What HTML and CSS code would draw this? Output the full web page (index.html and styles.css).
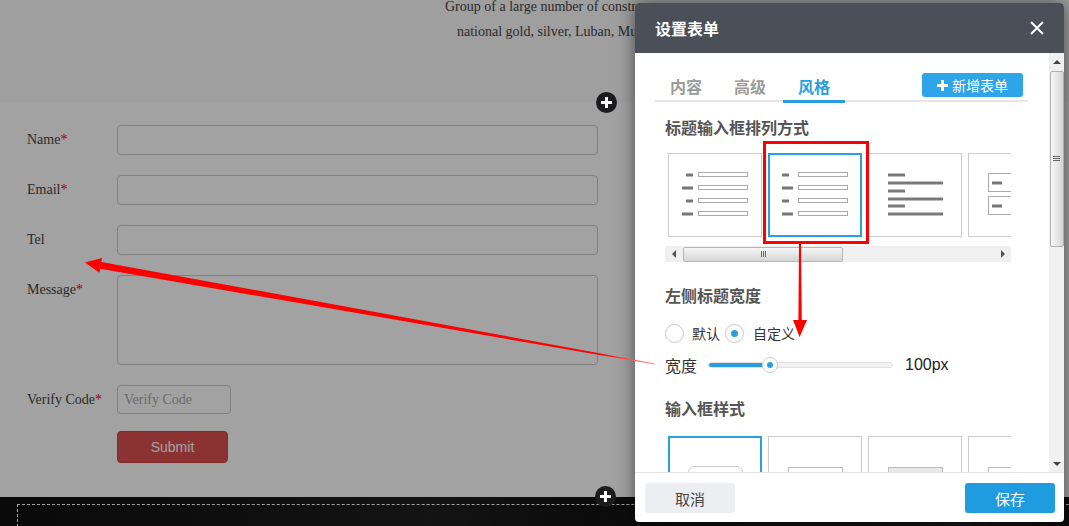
FILE: index.html
```html
<!DOCTYPE html>
<html lang="zh">
<head>
<meta charset="utf-8">
<title>设置表单</title>
<link rel="stylesheet" href="styles.css">
</head>
<body>
<div class="page">
  <section class="hero">
    <p class="intro">
      <span class="line l1">Group of a large number of constr</span>
      <span class="line l2">national gold, silver, Luban, Mu</span>
    </p>
  </section>
  <section class="form-sec">
    <form class="form">
      <div class="row"><label class="lbl">Name<em>*</em></label><input class="inp" type="text"></div>
      <div class="row"><label class="lbl">Email<em>*</em></label><input class="inp" type="text"></div>
      <div class="row"><label class="lbl">Tel</label><input class="inp" type="text"></div>
      <div class="row"><label class="lbl">Message<em>*</em></label><textarea class="inp area"></textarea></div>
      <div class="row"><label class="lbl">Verify Code<em>*</em></label><input class="inp code" type="text" placeholder="Verify Code"></div>
      <div class="row submit-row"><span></span><button type="button" class="submit">Submit</button></div>
    </form>
  </section>
  <section class="band"><div class="dash-box"></div></section>
</div>

<div class="overlay"></div>
<span class="plus p1"></span>
<span class="plus p2"></span>

<div class="modal">
  <header class="m-head">
    <h2 class="m-title">设置表单</h2>
    <svg class="close" width="14" height="14" viewBox="0 0 14 14"><path d="M1 1L13 13M13 1L1 13" stroke="#fff" stroke-width="2" fill="none"/></svg>
  </header>
  <div class="m-body">
    <div class="m-content">
      <div class="tabs">
        <span class="tab">内容</span>
        <span class="tab">高级</span>
        <span class="tab active">风格</span>
        <button type="button" class="add-btn"><svg width="11" height="11" viewBox="0 0 11 11"><rect x="4" y="0" width="3" height="11" fill="#fff"/><rect x="0" y="4" width="11" height="3" fill="#fff"/></svg>新增表单</button>
      </div>

      <h3 class="sec-title t1">标题输入框排列方式</h3>
      <div class="scroller">
        <div class="cards">
          <div class="card">
            <svg width="92" height="82" viewBox="0 0 92 82">
              <g fill="#777">
                <rect x="17" y="19.5" width="7" height="3"/>
                <rect x="13" y="32.5" width="11" height="3"/>
                <rect x="17" y="45.5" width="7" height="3"/>
                <rect x="13" y="58.5" width="11" height="3"/>
              </g>
              <g fill="none" stroke="#aaa">
                <rect x="29.5" y="18.5" width="49" height="4"/>
                <rect x="29.5" y="31.5" width="49" height="4"/>
                <rect x="29.5" y="44.5" width="49" height="4"/>
                <rect x="29.5" y="57.5" width="49" height="4"/>
              </g>
            </svg>
          </div>
          <div class="card selected">
            <svg width="92" height="82" viewBox="0 0 92 82">
              <g fill="#777">
                <rect x="13" y="19.5" width="7" height="3"/>
                <rect x="13" y="32.5" width="11" height="3"/>
                <rect x="13" y="45.5" width="7" height="3"/>
                <rect x="13" y="58.5" width="11" height="3"/>
              </g>
              <g fill="none" stroke="#aaa">
                <rect x="29.5" y="18.5" width="49" height="4"/>
                <rect x="29.5" y="31.5" width="49" height="4"/>
                <rect x="29.5" y="44.5" width="49" height="4"/>
                <rect x="29.5" y="57.5" width="49" height="4"/>
              </g>
            </svg>
          </div>
          <div class="card">
            <svg width="92" height="82" viewBox="0 0 92 82">
              <g fill="#7a7a7a">
                <rect x="19" y="19.5" width="17" height="3"/>
                <rect x="19" y="27.5" width="55" height="3"/>
                <rect x="19" y="35.5" width="17" height="3"/>
                <rect x="19" y="43.5" width="55" height="3"/>
                <rect x="19" y="50.5" width="17" height="3"/>
                <rect x="19" y="58.5" width="55" height="3"/>
              </g>
            </svg>
          </div>
          <div class="card">
            <svg width="92" height="82" viewBox="0 0 92 82">
              <g fill="none" stroke="#aaa">
                <rect x="19.5" y="19.5" width="60" height="18"/>
                <rect x="19.5" y="42.5" width="60" height="18"/>
              </g>
              <g fill="#777">
                <rect x="23" y="27.5" width="10" height="3"/>
                <rect x="23" y="50.5" width="10" height="3"/>
              </g>
            </svg>
          </div>
        </div>
        <div class="hbar">
          <span class="arr"><i class="tri-left"></i></span>
          <span class="hthumb"><i class="grip-v"></i></span>
          <span class="hspace"></span>
          <span class="arr"><i class="tri-right"></i></span>
        </div>
      </div>

      <h3 class="sec-title t2">左侧标题宽度</h3>
      <div class="radios">
        <span class="radio"></span><span class="r-label">默认</span>
        <span class="radio checked"><i></i></span><span class="r-label">自定义</span>
      </div>
      <div class="slider-row">
        <span class="s-label">宽度</span>
        <span class="track"><span class="fill"></span><span class="knob"><i></i></span></span>
        <span class="s-value">100px</span>
      </div>

      <h3 class="sec-title t3">输入框样式</h3>
      <div class="cards cards2">
        <div class="card selected"><span class="shape round"></span></div>
        <div class="card"><span class="shape square"></span></div>
        <div class="card"><span class="shape filled"></span></div>
        <div class="card"><span class="shape square"></span></div>
      </div>
    </div>
    <div class="vscroll">
      <span class="varr"><i class="tri-up"></i></span>
      <span class="vthumb"><i class="grip-h"></i></span>
      <span class="vspace"></span>
      <span class="varr"><i class="tri-down"></i></span>
    </div>
  </div>
  <footer class="m-foot">
    <button type="button" class="btn cancel">取消</button>
    <button type="button" class="btn save">保存</button>
  </footer>
</div>

<svg class="notes" width="1069" height="526" viewBox="0 0 1069 526">
  <defs>
    <linearGradient id="fade" gradientUnits="userSpaceOnUse" x1="85" y1="0" x2="656" y2="0">
      <stop offset="0" stop-color="#ff0000"/>
      <stop offset="0.9" stop-color="#ff0000"/>
      <stop offset="1" stop-color="#ff9a9a"/>
    </linearGradient>
  </defs>
  <rect x="764.5" y="142.5" width="103" height="100" fill="none" stroke="#ff0000" stroke-width="3"/>
  <polygon points="799,244 801,244 801.8,320 807,320 799.6,337 793,320 798.4,320" fill="#ff0000"/>
  <polygon points="85,262.5 102.1,257.9 101.4,261.9 655.1,363.4 654.9,364.6 100.1,268.7 99.4,272.7" fill="url(#fade)"/>
</svg>
</body>
</html>
```

FILE: styles.css
```css
html, body {
  margin: 0;
  padding: 0;
}
body {
  width: 1069px;
  height: 526px;
  overflow: hidden;
  background: #fff;
  font-family: "Liberation Serif", "Times New Roman", serif;
  position: relative;
}

/* ---------- page under the overlay ---------- */
.page {
  display: flex;
  flex-direction: column;
  height: 526px;
}
.hero {
  height: 102px;
  background: #fafafa;
  overflow: hidden;
}
.intro {
  margin: 0 0 0 445px;
  font-size: 14px;
  color: #444;
  white-space: nowrap;
}
.line {
  display: block;
  line-height: 25px;
}
.l1 { margin-top: -6px; }
.l2 { margin-left: 12px; }

.form-sec {
  height: 395px;
  box-sizing: border-box;
  padding: 23px 0 0 27px;
  background: #fff;
}
.form {
  display: flex;
  flex-direction: column;
  gap: 20px;
}
.row {
  display: grid;
  grid-template-columns: 90px auto;
  align-items: start;
}
.lbl {
  font-size: 14px;
  line-height: 30px;
  color: #444;
  white-space: nowrap;
}
.lbl em {
  font-style: normal;
  color: #ff0000;
}
.inp {
  box-sizing: border-box;
  width: 481px;
  height: 30px;
  margin: 0;
  border: 1px solid #ccc;
  border-radius: 4px;
  background: #fff;
  font-family: "Liberation Serif", serif;
  font-size: 14px;
  padding: 0 6px;
  outline: none;
}
.area {
  height: 90px;
  resize: none;
  display: block;
}
.code {
  width: 114px;
  height: 29px;
}
.code::placeholder {
  color: #a8a8a8;
}
.submit-row {
  margin-top: -4px;
}
.submit {
  width: 111px;
  height: 32px;
  margin: 0;
  border: 1px solid #d0403c;
  border-radius: 4px;
  background: #db4f4f;
  color: #fff;
  font-family: "Liberation Sans", Arial, sans-serif;
  font-size: 14px;
  padding: 0;
}
.band {
  flex: 1;
  box-sizing: border-box;
  padding: 7px 0 0 17px;
  background: linear-gradient(90deg, #101010 0%, #181818 25%, #202020 40%, #121212 55%, #1a1a1a 75%, #242424 90%, #121212 100%);
}
.dash-box {
  height: 100%;
  border-top: 1px dashed #fff;
  border-left: 1px dashed #fff;
}

/* ---------- overlay + floating items ---------- */
.overlay {
  position: absolute;
  inset: 0;
  background: rgba(0, 0, 0, 0.365);
  z-index: 10;
}
.plus {
  position: absolute;
  width: 21px;
  height: 21px;
  border-radius: 50%;
  background: #1c1c1f;
  z-index: 11;
}
.plus::before,
.plus::after {
  content: "";
  position: absolute;
  background: #fff;
  left: 5px;
  top: 9px;
  width: 11px;
  height: 3px;
}
.plus::after {
  left: 9px;
  top: 5px;
  width: 3px;
  height: 11px;
}
.p1 { left: 596px; top: 92px; }
.p2 { left: 595px; top: 486px; }

/* ---------- modal ---------- */
.modal {
  position: absolute;
  left: 635px;
  top: 3px;
  width: 429px;
  height: 519px;
  z-index: 20;
  display: flex;
  flex-direction: column;
  background: #fff;
  border-radius: 4px;
  overflow: hidden;
  box-shadow: 0 0 18px rgba(0, 0, 0, 0.55);
  font-family: "Liberation Sans", "Noto Sans CJK SC", sans-serif;
}
.m-head {
  height: 50px;
  flex: none;
  box-sizing: border-box;
  background: #4b4f57;
  display: flex;
  align-items: center;
  justify-content: space-between;
  padding: 0 20px;
}
.m-title {
  margin: 0;
  font-size: 16px;
  font-weight: bold;
  color: #fff;
}
.close { display: block; }

.m-body {
  flex: 1;
  min-height: 0;
  display: flex;
}
.m-content {
  flex: 1;
  min-width: 0;
  overflow: hidden;
  padding: 0 21px 0 20px;
}

.tabs {
  display: flex;
  align-items: flex-end;
  gap: 2px;
  margin-top: 19px;
  height: 28px;
  border-bottom: 2px solid #e6e6e6;
}
.tab {
  box-sizing: border-box;
  width: 62px;
  height: 30px;
  padding-top: 3px;
  line-height: 26px;
  text-align: center;
  font-size: 16px;
  font-weight: bold;
  color: #9a9a9a;
  border-bottom: 2px solid transparent;
  margin-bottom: -2px;
}
.tab.active {
  color: #2a9fe0;
  border-bottom: 3px solid #2a9fe0;
  margin-bottom: -3px;
  height: 31px;
}
.add-btn {
  align-self: flex-start;
  margin: 1px 5px 0 auto;
  height: 24px;
  width: 101px;
  border: none;
  border-radius: 3px;
  background: #2ea5e9;
  color: #fff;
  font-family: "Liberation Sans", "Noto Sans CJK SC", sans-serif;
  font-size: 14px;
  padding: 0;
  display: flex;
  align-items: center;
  justify-content: center;
  gap: 4px;
}

.sec-title {
  margin: 0;
  padding-left: 10px;
  font-size: 16px;
  line-height: 22px;
  font-weight: bold;
  color: #555;
}
.t1 { margin: 16px 0 13px; }
.t2 { margin: 24px 0 15px; }
.t3 { margin: 24px 0 15px; }

.scroller {
  margin-left: 10px;
  width: 346px;
}
.cards {
  display: flex;
  gap: 6px;
  padding-left: 3px;
  overflow: hidden;
}
.cards2 {
  margin-left: 10px;
  width: 343px;
}
.card {
  flex: none;
  box-sizing: border-box;
  width: 94px;
  height: 84px;
  border: 1px solid #ccc;
  background: #fff;
}
.card svg { display: block; }
.card.selected {
  border-color: #2aa0e4;
  box-shadow: inset 0 0 0 1px #2aa0e4;
}

.hbar {
  margin-top: 9px;
  height: 16px;
  background: #f0f0f0;
  display: flex;
  align-items: center;
}
.arr {
  width: 17px;
  height: 16px;
  display: flex;
  align-items: center;
  justify-content: center;
}
.tri-left {
  border-right: 4px solid #555;
  border-top: 4px solid transparent;
  border-bottom: 4px solid transparent;
}
.tri-right {
  border-left: 4px solid #555;
  border-top: 4px solid transparent;
  border-bottom: 4px solid transparent;
}
.hthumb {
  box-sizing: border-box;
  width: 160px;
  height: 15px;
  margin-left: 1px;
  border: 1px solid #b5b5b5;
  border-radius: 2px;
  background: linear-gradient(#f7f7f7, #e2e2e2 60%, #d6d6d6);
  display: flex;
  align-items: center;
  justify-content: center;
}
.grip-v {
  width: 5px;
  height: 6px;
  background: repeating-linear-gradient(90deg, #666 0 1px, transparent 1px 2px);
}
.hspace { flex: 1; }

.radios {
  display: flex;
  align-items: center;
  height: 20px;
  padding-left: 10px;
}
.radio {
  box-sizing: border-box;
  width: 19px;
  height: 19px;
  border: 1px solid #ccc;
  border-radius: 50%;
  display: flex;
  align-items: center;
  justify-content: center;
}
.radio.checked i {
  width: 7px;
  height: 7px;
  border-radius: 50%;
  background: #2a9fe0;
}
.r-label {
  font-size: 14px;
  color: #333;
  margin: 0 5px 0 8px;
}
.radio.checked + .r-label { margin-left: 9px; }

.slider-row {
  display: flex;
  align-items: center;
  height: 20px;
  margin-top: 12px;
  padding-left: 10px;
}
.s-label {
  font-size: 16px;
  color: #333;
}
.track {
  position: relative;
  box-sizing: border-box;
  width: 185px;
  height: 6px;
  margin-left: 11px;
  border: 1px solid #e2e2e2;
  border-radius: 3px;
  background: #f2f2f2;
}
.fill {
  display: block;
  width: 62px;
  height: 100%;
  border-radius: 3px;
  background: #2b9be0;
}
.knob {
  position: absolute;
  left: 53px;
  top: -6px;
  box-sizing: border-box;
  width: 16px;
  height: 16px;
  border-radius: 50%;
  border: 1px solid #cfcfcf;
  background: #fff;
  display: flex;
  align-items: center;
  justify-content: center;
}
.knob i {
  width: 6px;
  height: 6px;
  border-radius: 50%;
  background: #2a9fe0;
}
.s-value {
  margin-left: 12px;
  font-size: 16px;
  color: #222;
}

.cards2 .card {
  padding-top: 30px;
  display: flex;
  justify-content: center;
  align-items: flex-start;
}
.cards2 .card.selected { padding-top: 29px; }
.shape {
  box-sizing: border-box;
  width: 55px;
  height: 22px;
  border: 1px solid #bbb;
}
.shape.round { border-radius: 6px; border-color: #ccc; }
.shape.filled { background: #e8e8e8; }

.vscroll {
  flex: none;
  width: 15px;
  background: #f0f0f0;
  display: flex;
  flex-direction: column;
  align-items: center;
}
.varr {
  width: 15px;
  height: 17px;
  display: flex;
  align-items: center;
  justify-content: center;
}
.tri-up {
  border-bottom: 4px solid #444;
  border-left: 4px solid transparent;
  border-right: 4px solid transparent;
}
.tri-down {
  border-top: 4px solid #444;
  border-left: 4px solid transparent;
  border-right: 4px solid transparent;
}
.vthumb {
  box-sizing: border-box;
  width: 14px;
  height: 176px;
  margin-top: 1px;
  border: 1px solid #b0b0b0;
  border-radius: 2px;
  background: linear-gradient(90deg, #f6f6f6, #e4e4e4 60%, #d4d4d4);
  display: flex;
  align-items: center;
  justify-content: center;
}
.grip-h {
  width: 7px;
  height: 6px;
  background: repeating-linear-gradient(180deg, #666 0 1px, transparent 1px 2px);
}
.vspace { flex: 1; }

.m-foot {
  flex: none;
  height: 50px;
  box-sizing: border-box;
  border-top: 1px solid #e5e5e5;
  display: flex;
  justify-content: space-between;
  align-items: flex-start;
  padding: 10px 9px 0 10px;
}
.btn {
  width: 90px;
  height: 30px;
  border: none;
  border-radius: 3px;
  font-family: "Liberation Sans", "Noto Sans CJK SC", sans-serif;
  font-size: 15px;
  padding: 0;
}
.cancel {
  background: #eceef1;
  color: #444;
}
.save {
  background: #1f9be0;
  color: #fff;
}

/* ---------- annotations ---------- */
.notes {
  position: absolute;
  left: 0;
  top: 0;
  z-index: 30;
  pointer-events: none;
}
```
